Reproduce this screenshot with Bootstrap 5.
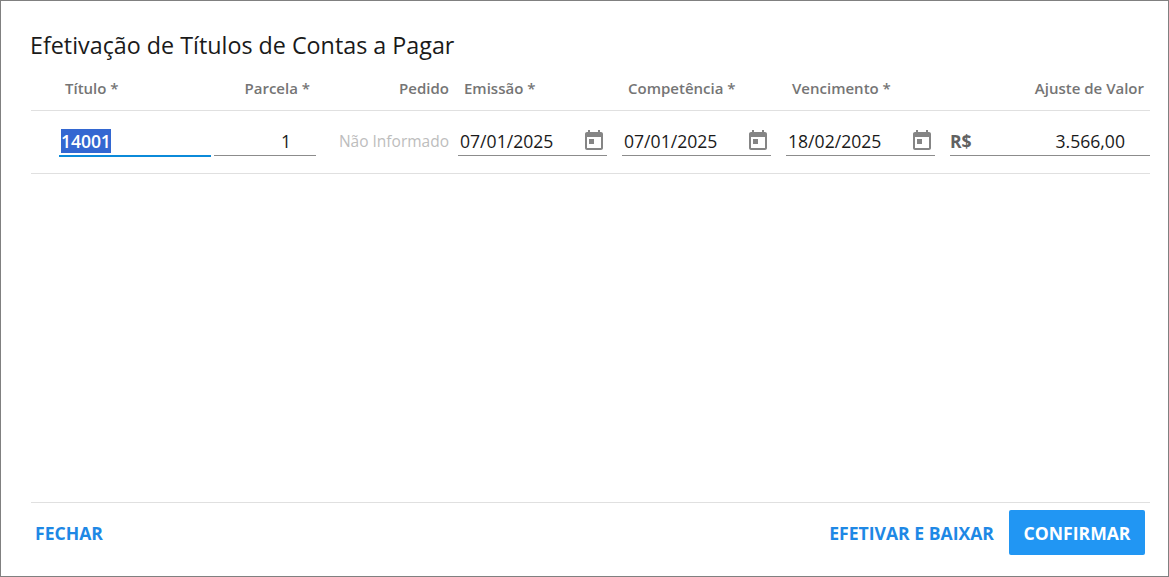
<!DOCTYPE html>
<html lang="pt-BR">
<head>
    <meta charset="UTF-8">
    <meta name="viewport" content="width=device-width, initial-scale=1.0">
    <title>Efetivação de Títulos</title>
    <link href="https://cdn.jsdelivr.net/npm/bootstrap@5.3.3/dist/css/bootstrap.min.css" rel="stylesheet">
    <script src="https://cdn.jsdelivr.net/npm/bootstrap@5.3.3/dist/js/bootstrap.bundle.min.js"></script>
    <style>
        html, body { height: 100%; }
        body {
            font-family: "Open Sans", sans-serif;
            background-color: #fff;
            overflow: hidden;
        }
        .dialog-box {
            height: 577px;
            border: 1px solid #808080;
            padding: 29px 18px 21px 30px;
        }
        .dialog-title {
            font-size: 23.3px;
            line-height: 30px;
            font-weight: 400;
            color: #1a1a1a;
            margin: 0 0 11px -1px;
            height: 30px;
        }
        .grid-cols {
            display: grid;
            grid-template-columns: 180px 105px 133px 158px 164px 164px 215px;
            border-bottom: 1px solid #e0e0e0;
        }
        .head-row { height: 40px; align-items: start; padding-top: 7px; }
        .body-row { height: 63px; padding-top: 18px; }
        .head-cell {
            font-size: 15px;
            line-height: 20px;
            font-weight: 600;
            color: #757575;
            white-space: nowrap;
        }
        .head-title { padding-left: 34px; }
        .head-parc { padding-right: 6px; text-align: right; }
        .head-ped { text-align: right; }
        .head-first { padding-left: 15px; }
        .head-date { padding-left: 21px; }
        .head-value { padding-right: 6px; text-align: right; }
        .field-line {
            height: 27px;
            border-bottom: 1px solid #8c8c8c;
            font-size: 17.6px;
            line-height: 24px;
            font-weight: 500;
            color: #1a1a1a;
            padding: 0 2px;
        }
        .field-active { border-bottom: 2px solid #0b8ad9; height: 28px; }
        .text-sel { background-color: #3367d1; color: #fff; display: inline-block; line-height: 24px; font-weight: 600; letter-spacing: -.1px; }
        .cell-title { padding-left: 28px; }
        .cell-parc { padding-left: 3px; }
        .cell-parc .field-line { text-align: right; padding-right: 25px; }
        .cell-ped {
            text-align: right;
            font-size: 15.5px;
            line-height: 24px;
            color: #bdbdbd;
        }
        .cell-date { padding-left: 15px; }
        .cell-date-first { padding-left: 9px; }
        .cal-icon { width: 24px; height: 24px; fill: #858585; margin-right: -1px; margin-top: -1px; flex: none; }
        .cur-sign { font-weight: 700; color: #616161; }
        .cell-money .field-line { padding-right: 25px; padding-left: 0; }
        .foot-row { border-top: 1px solid #e0e0e0; padding-top: 7px; margin-bottom: -2px; }
        .btn-link-flat {
            font-size: 17.6px;
            font-weight: 700;
            color: #1e88e5;
            background: none;
            border: 0;
            padding: 0 5px;
            line-height: 47px;
            text-transform: uppercase;
        }
        .btn-close-flat { margin-left: -1px; }
        .btn-fill {
            font-size: 17.6px;
            font-weight: 700;
            color: #fff;
            background-color: #2196f3;
            border: 0;
            border-radius: 2px;
            height: 45px;
            width: 136px;
            padding: 2px 0 0;
            margin-left: 10px;
            margin-right: 5px;
        }
    </style>
</head>
<body>
    <div class="dialog-box d-flex flex-column">
        <h1 class="dialog-title">Efetivação de Títulos de Contas a Pagar</h1>

        <div class="grid-cols head-row">
            <div class="head-cell head-title">Título *</div>
            <div class="head-cell head-parc">Parcela *</div>
            <div class="head-cell head-ped">Pedido</div>
            <div class="head-cell head-first">Emissão *</div>
            <div class="head-cell head-date">Competência *</div>
            <div class="head-cell head-date">Vencimento *</div>
            <div class="head-cell head-value">Ajuste de Valor</div>
        </div>

        <div class="grid-cols body-row">
            <div class="cell-title">
                <div class="field-line field-active"><span class="text-sel">14001</span></div>
            </div>
            <div class="cell-parc">
                <div class="field-line">1</div>
            </div>
            <div class="cell-ped">Não Informado</div>
            <div class="cell-date-first">
                <div class="field-line d-flex justify-content-between">
                    <span>07/01/2025</span>
                    <svg class="cal-icon" viewBox="0 0 24 24"><path d="M19 4h-1V2h-2v2H8V2H6v2H5c-1.1 0-2 .9-2 2v14c0 1.1.9 2 2 2h14c1.1 0 2-.9 2-2V6c0-1.1-.9-2-2-2zm0 16H5V9h14v11zM7 11h5v5H7z"/></svg>
                </div>
            </div>
            <div class="cell-date">
                <div class="field-line d-flex justify-content-between">
                    <span>07/01/2025</span>
                    <svg class="cal-icon" viewBox="0 0 24 24"><path d="M19 4h-1V2h-2v2H8V2H6v2H5c-1.1 0-2 .9-2 2v14c0 1.1.9 2 2 2h14c1.1 0 2-.9 2-2V6c0-1.1-.9-2-2-2zm0 16H5V9h14v11zM7 11h5v5H7z"/></svg>
                </div>
            </div>
            <div class="cell-date">
                <div class="field-line d-flex justify-content-between">
                    <span>18/02/2025</span>
                    <svg class="cal-icon" viewBox="0 0 24 24"><path d="M19 4h-1V2h-2v2H8V2H6v2H5c-1.1 0-2 .9-2 2v14c0 1.1.9 2 2 2h14c1.1 0 2-.9 2-2V6c0-1.1-.9-2-2-2zm0 16H5V9h14v11zM7 11h5v5H7z"/></svg>
                </div>
            </div>
            <div class="cell-date cell-money">
                <div class="field-line d-flex justify-content-between">
                    <span class="cur-sign">R$</span>
                    <span>3.566,00</span>
                </div>
            </div>
        </div>

        <div class="foot-row d-flex justify-content-between align-items-start mt-auto">
            <button type="button" class="btn-link-flat btn-close-flat">Fechar</button>
            <div class="d-flex align-items-start">
                <button type="button" class="btn-link-flat">Efetivar e baixar</button>
                <button type="button" class="btn-fill">CONFIRMAR</button>
            </div>
        </div>
    </div>
</body>
</html>
